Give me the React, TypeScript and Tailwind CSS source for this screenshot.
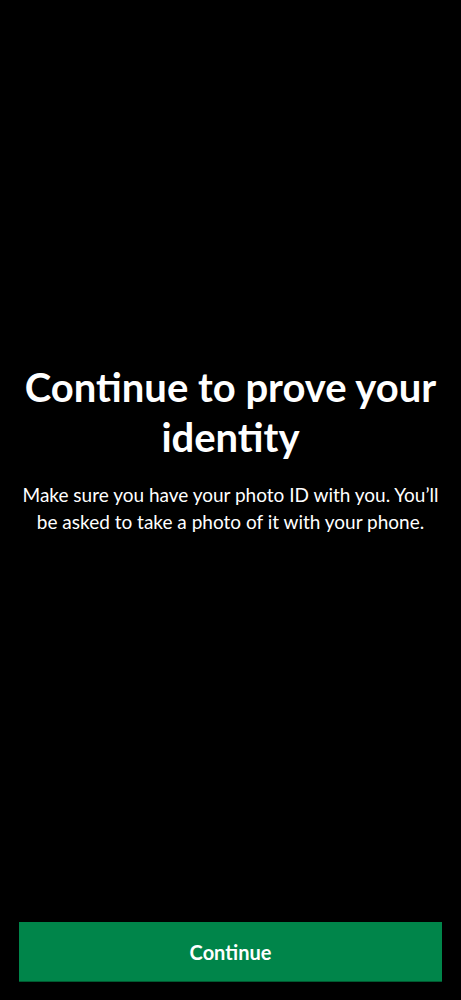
export default function App() {
  return (
    <div
      className="flex h-[1000px] w-full flex-col bg-black text-white"
      style={{ fontFamily: 'Lato, "Noto Sans", Arial, sans-serif' }}
    >
      {/* Message */}
      <div className="flex flex-1 flex-col items-center justify-center px-5 pb-[26px] text-center">
        <h1 className="text-[40px] font-bold leading-[50px]">
          Continue to prove your identity
        </h1>
        <p className="mt-[19px] text-[19px] leading-[27px]">
          Make sure you have your photo ID with you. You’ll be asked to take a photo of it with your phone.
        </p>
      </div>

      {/* Footer */}
      <div className="px-[19px] pb-[19px]">
        <button className="h-[59px] w-full bg-[#00854a] text-[20px] font-bold text-white shadow-[0_1px_0_#005a30]">
          Continue
        </button>
      </div>
    </div>
  );
}
